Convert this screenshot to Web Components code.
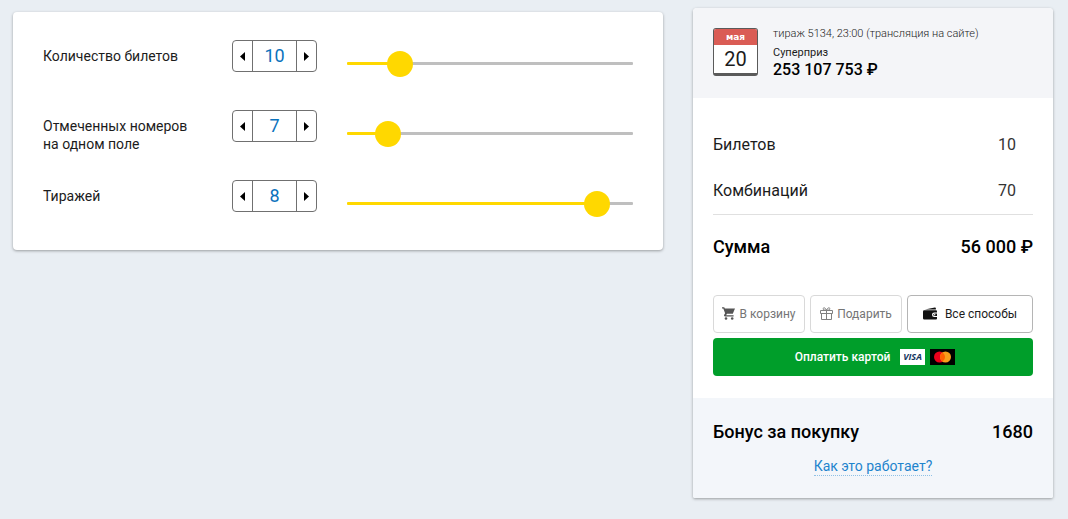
<!DOCTYPE html>
<html lang="ru">
<head>
<meta charset="utf-8">
<meta name="viewport" content="width=device-width, initial-scale=1">
<title>Оплата билетов</title>
<style>
  body { margin: 0; background: #e9eef3; color: #1c1c1c; font-family: Roboto, "Liberation Sans", sans-serif; font-size: 14px; line-height: 18px; }
</style>
</head>
<body>
<lottery-page>
  <settings-panel slot="settings">
    <setting-row label="Количество билетов" min="1" max="50" value="10"></setting-row>
    <setting-row label="Отмеченных номеров на одном поле" min="6" max="13" value="7"></setting-row>
    <setting-row label="Тиражей" min="1" max="9" value="8"></setting-row>
  </settings-panel>
  <order-card slot="order">
    <draw-info slot="header" month="мая" day="20">
      <span slot="draw">тираж 5134, 23:00 (трансляция на сайте)</span>
      <span slot="title">Суперприз</span>
      <span slot="prize">253 107 753 ₽</span>
    </draw-info>
    <summary-line><span>Билетов</span><span slot="value">10</span></summary-line>
    <summary-line><span>Комбинаций</span><span slot="value">70</span></summary-line>
    <summary-line total class="sum"><span>Сумма</span><span slot="value">56 000 ₽</span></summary-line>
    <pay-actions slot="actions"></pay-actions>
    <bonus-info slot="footer">
      <summary-line total><span>Бонус за покупку</span><span slot="value">1680</span></summary-line>
    </bonus-info>
  </order-card>
</lottery-page>

<script>
const define = (name, html, setup) => {
  const template = document.createElement('template');
  template.innerHTML = html;
  customElements.define(name, class extends HTMLElement {
    constructor() {
      super();
      this.attachShadow({ mode: 'open' }).append(template.content.cloneNode(true));
    }
    connectedCallback() { if (setup) setup(this, this.shadowRoot); }
  });
};

define('lottery-page', `
  <style>
    :host { display: block; }
    main { display: flex; align-items: flex-start; gap: 30px; padding: 8px 15px 20px 13px; }
    .settings { flex: 1; min-width: 0; margin-top: 4px; }
    .order { flex: 0 0 360px; }
    @media (max-width: 860px) {
      main { flex-direction: column; align-items: stretch; }
      .order { flex-basis: auto; }
    }
  </style>
  <main>
    <div class="settings"><slot name="settings"></slot></div>
    <div class="order"><slot name="order"></slot></div>
  </main>`);

define('settings-panel', `
  <style>
    :host { display: block; background: #fff; border-radius: 4px; padding: 28px 30px 0; box-shadow: 0 1px 3px rgba(0,0,0,.35); }
  </style>
  <slot></slot>`);

define('setting-row', `
  <style>
    :host { display: grid; grid-template-columns: 159px 85px minmax(0, 1fr); column-gap: 30px; align-items: start; min-height: 70px; }
    label { padding-top: 7px; }
    .stepper { display: flex; box-sizing: border-box; height: 32px; border: 1px solid #707070; border-radius: 4px; overflow: hidden; }
    button { flex: 0 0 19px; display: flex; align-items: center; justify-content: center; padding: 0; border: 0; background: none; cursor: pointer; }
    input { font: inherit; }
    .number { flex: 1; min-width: 0; box-sizing: border-box; padding: 0 0 2px; border: solid #707070; border-width: 0 1px; text-align: center; font-size: 18px; color: #0b72bc; background: none; outline: none; }
    .slider { display: grid; margin-top: 11px; }
    .slider::before { content: ""; grid-area: 1 / 1; height: 3px; margin-top: 11px; border-radius: 1px;
      background: linear-gradient(to right, #ffd800 var(--fill), #bfbfbf var(--fill)); }
    .range { grid-area: 1 / 1; appearance: none; -webkit-appearance: none; height: 26px; margin: 0 -13px; background: none; cursor: pointer; }
    .range::-webkit-slider-thumb { -webkit-appearance: none; width: 26px; height: 26px; border: 0; border-radius: 50%; background: #ffd800; }
    .range::-moz-range-thumb { width: 26px; height: 26px; border: 0; border-radius: 50%; background: #ffd800; }
  </style>
  <label for="number"></label>
  <div class="stepper">
    <button type="button" class="less" aria-label="Меньше"><svg width="5" height="9" viewBox="0 0 5 9"><path d="M5 0v9L0 4.500z"/></svg></button>
    <input class="number" id="number" type="text" inputmode="numeric">
    <button type="button" class="more" aria-label="Больше"><svg width="5" height="9" viewBox="0 0 5 9"><path d="M0 0v9l5-4.500z"/></svg></button>
  </div>
  <div class="slider"><input class="range" type="range"></div>`,
  (host, root) => {
    const label = host.getAttribute('label');
    const min = +host.getAttribute('min'), max = +host.getAttribute('max');
    const number = root.querySelector('.number'), range = root.querySelector('.range');
    root.querySelector('label').textContent = label;
    range.setAttribute('aria-label', label);
    range.min = min;
    range.max = max;
    const set = v => {
      v = Math.min(max, Math.max(min, Math.round(v) || min));
      number.value = v;
      range.value = v;
      host.style.setProperty('--fill', (v - min) / (max - min) * 100 + '%');
    };
    range.addEventListener('input', () => set(+range.value));
    number.addEventListener('change', () => set(+number.value));
    root.querySelector('.less').addEventListener('click', () => set(+range.value - 1));
    root.querySelector('.more').addEventListener('click', () => set(+range.value + 1));
    set(+host.getAttribute('value'));
  });

define('order-card', `
  <style>
    :host { display: block; background: #fff; border-radius: 4px 4px 2px 2px; overflow: hidden; box-shadow: 0 1px 3px rgba(0,0,0,.35); }
    header { background: #f4f5f8; padding: 20px 20px 17px; }
    .lines { padding: 24px 20px 0; }
    .actions { padding: 24px 20px 22px; }
    footer { background: #f3f6fa; padding: 10px 20px 22px; }
    ::slotted(.sum) { border-top: 1px solid #e0e0e0; padding-top: 8px; }
  </style>
  <header><slot name="header"></slot></header>
  <div class="lines"><slot></slot></div>
  <div class="actions"><slot name="actions"></slot></div>
  <footer><slot name="footer"></slot></footer>`);

define('draw-info', `
  <style>
    :host { display: flex; gap: 15px; }
    .calendar { flex: none; box-sizing: border-box; width: 45px; height: 48px; border: 1px solid #5a5a5a; border-bottom-width: 3px; border-radius: 3px; background: #fff; text-align: center; overflow: hidden; }
    .month { height: 16px; background: #da5c55; color: #fff; font: bold 9px/16px "DejaVu Sans", sans-serif; }
    .day { font-size: 20px; line-height: 28px; }
    .text { display: flex; flex-direction: column; }
    .draw { font-size: 11px; line-height: 12px; font-weight: 300; margin-bottom: 7px; }
    .title { font-size: 11px; line-height: 12px; }
    .prize { font-size: 16px; line-height: 22px; font-weight: 500; color: #000; }
  </style>
  <div class="calendar"><div class="month"></div><div class="day"></div></div>
  <div class="text">
    <div class="draw"><slot name="draw"></slot></div>
    <div class="title"><slot name="title"></slot></div>
    <div class="prize"><slot name="prize"></slot></div>
  </div>`,
  (host, root) => {
    root.querySelector('.month').textContent = host.getAttribute('month');
    root.querySelector('.day').textContent = host.getAttribute('day');
  });

define('summary-line', `
  <style>
    :host { display: flex; justify-content: space-between; font-size: 16px; line-height: 46px; }
    :host(:not([total])) .value { padding-right: 17px; color: #333; }
    :host([total]) { font-size: 18px; line-height: 48px; font-weight: 500; color: #000; }
  </style>
  <div><slot></slot></div><div class="value"><slot name="value"></slot></div>`);

define('pay-actions', `
  <style>
    :host { display: grid; grid-template-columns: 92fr 92fr 126fr; gap: 5px; }
    button { display: flex; align-items: center; justify-content: center; box-sizing: border-box; height: 38px; padding: 0; border: 1px solid #d9d9d9; border-radius: 4px; background: #fff; font: 12px/18px Roboto, sans-serif; color: #757575; gap: 4px; white-space: nowrap; cursor: pointer; }
    .icon { margin-bottom: 2px; }
    .all { border-color: #b5b5b5; color: #1c1c1c; gap: 7px; }
    .card { grid-column: 1 / -1; padding-left: 4px; border: 0; background: #009e2a; color: #fff; font-weight: 500; gap: 10px; }
    .logos { display: flex; gap: 5px; }
  </style>
  <button type="button">
    <svg class="icon" width="13" height="13" viewBox="0 0 13 13" fill="#555"><path d="M0 .3h2.200l.7 1.300H13l-2.200 5.200H5l-.9 1.500h7.500v1.200H3.200c-1 0-1.500-.9-1-1.700l.9-1.500L1.300 1.500H0z"/><circle cx="4" cy="11.500" r="1.300"/><circle cx="10.200" cy="11.500" r="1.300"/></svg>
    <span>В корзину</span>
  </button>
  <button type="button">
    <svg class="icon" width="13" height="13" viewBox="0 0 13 13" fill="none" stroke="#808080"><path d="M.5 3.500h12v3H.5zM1.500 6.500v6h10v-6M6.500 3.500v9M6.500 3.300C5.500.8 3.800.2 3.200 1.300c-.5 1.100.4 1.900 3.300 2 2.900-.1 3.800-.9 3.300-2C9.200.2 7.500.8 6.500 3.300"/></svg>
    <span>Подарить</span>
  </button>
  <button type="button" class="all">
    <svg class="icon" width="15" height="13" viewBox="0 0 15 13"><path d="M1.800 2.600 11.800.4c.6-.1.9.1 1 .6l.1 1.600z" fill="#111"/><path d="M1.200 3.200H13q1 0 1 1v7.300q0 1-1 1H1.200Q0 12.500 0 11.300V4.400q0-1.200 1.200-1.200z" fill="#111"/><path d="M14.200 5.600h-3a2.200 2.200 0 0 0 0 4.400h3V8.900h-2.600V6.700h2.600z" fill="#fff"/><path d="M11.300 6.700h2.700v2.200h-2.700a1.100 1.100 0 0 1 0-2.200z" fill="#111"/><circle cx="11.700" cy="7.800" r=".7" fill="#fff"/></svg>
    <span>Все способы</span>
  </button>
  <button type="button" class="card">
    <span>Оплатить картой</span>
    <span class="logos">
      <svg width="25" height="16" viewBox="0 0 25 16"><rect width="25" height="16" fill="#fff"/><text x="12.500" y="11" text-anchor="middle" font-family="Open Sans" font-size="9" font-weight="700" font-style="italic" fill="#14365f">VISA</text></svg>
      <svg width="25" height="16" viewBox="0 0 25 16"><rect width="25" height="16" fill="#000"/><circle cx="9.500" cy="8" r="5.500" fill="#eb001b"/><circle cx="15.500" cy="8" r="5.500" fill="#f79e1b"/><path d="M12.500 3.400a5.500 5.500 0 0 1 0 9.200 5.500 5.500 0 0 1 0-9.200z" fill="#ff5f00"/></svg>
    </span>
  </button>`);

define('bonus-info', `
  <style>
    :host { display: block; text-align: center; }
    a { display: inline-block; margin-top: 1px; color: #1f84cd; text-decoration: none; border-bottom: 1px dotted #8fc1e6; line-height: 18px; }
  </style>
  <slot></slot>
  <a href="#how">Как это работает?</a>`);
</script>
</body>
</html>
